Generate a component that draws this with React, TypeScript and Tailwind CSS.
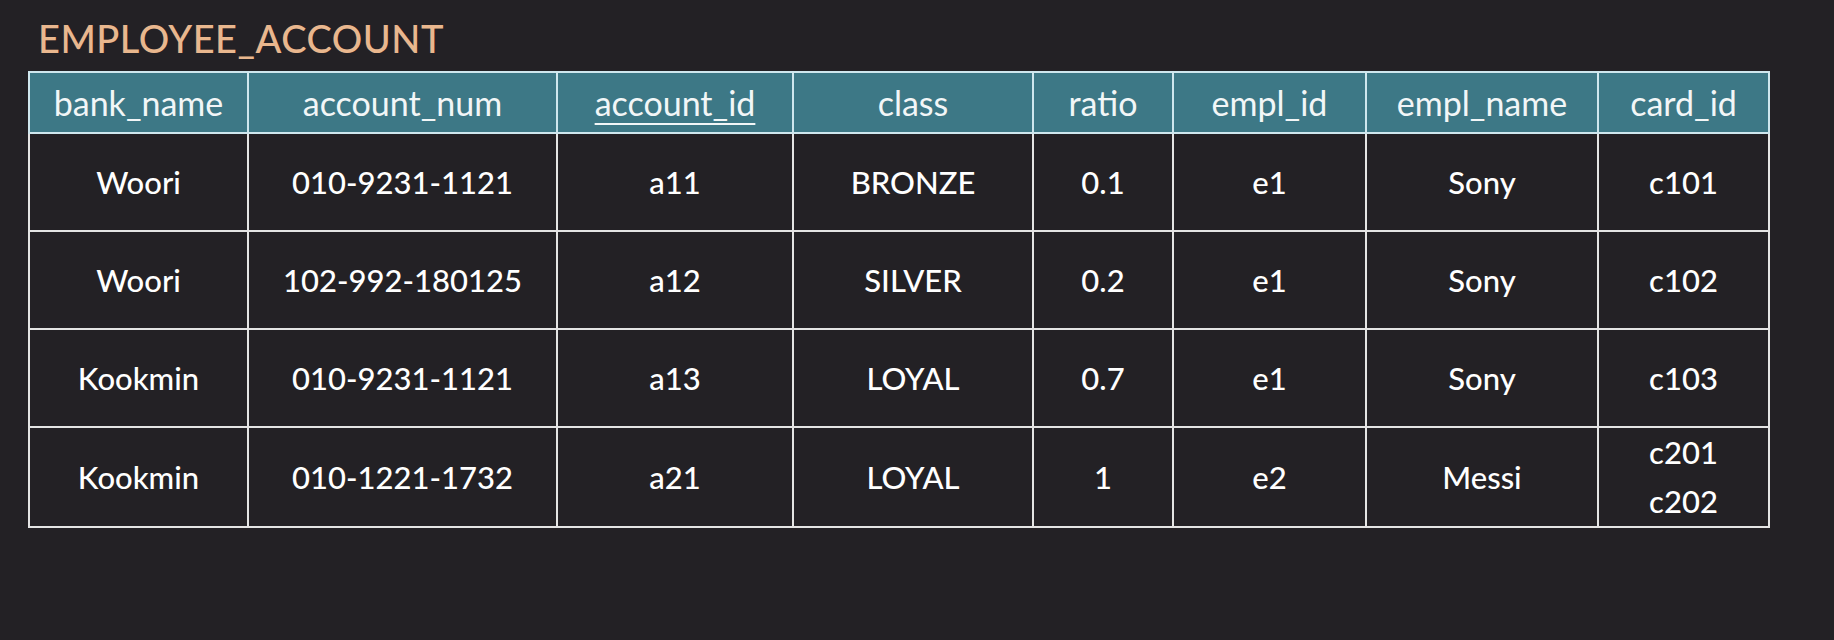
import React from 'react';

type Row = {
  bank: string;
  num: string;
  id: string;
  cls: string;
  ratio: string;
  emplId: string;
  emplName: string;
  cards: string[];
};

const columns = [
  { key: 'bank_name', width: 'w-[219px]' },
  { key: 'account_num', width: 'w-[309px]' },
  { key: 'account_id', width: 'w-[236px]', pk: true },
  { key: 'class', width: 'w-[240px]' },
  { key: 'ratio', width: 'w-[140px]' },
  { key: 'empl_id', width: 'w-[193px]' },
  { key: 'empl_name', width: 'w-[232px]' },
  { key: 'card_id', width: 'w-[171px]' },
];

const rows: Row[] = [
  { bank: 'Woori', num: '010-9231-1121', id: 'a11', cls: 'BRONZE', ratio: '0.1', emplId: 'e1', emplName: 'Sony', cards: ['c101'] },
  { bank: 'Woori', num: '102-992-180125', id: 'a12', cls: 'SILVER', ratio: '0.2', emplId: 'e1', emplName: 'Sony', cards: ['c102'] },
  { bank: 'Kookmin', num: '010-9231-1121', id: 'a13', cls: 'LOYAL', ratio: '0.7', emplId: 'e1', emplName: 'Sony', cards: ['c103'] },
  { bank: 'Kookmin', num: '010-1221-1732', id: 'a21', cls: 'LOYAL', ratio: '1', emplId: 'e2', emplName: 'Messi', cards: ['c201', 'c202'] },
];

export default function App() {
  return (
    <div className="w-[1834px] h-[640px] bg-[#232125] overflow-hidden font-['Lato','Liberation_Sans',sans-serif]">
      <div className="pl-[38px] pt-[15px] pb-[10px]">
        <h1 className="text-[38px] leading-[46px] font-medium text-[#e9b78e] tracking-[0.5px]">EMPLOYEE_ACCOUNT</h1>
      </div>
      <div className="pl-[28px]">
        <table className="border-collapse table-fixed text-center text-white">
          <thead>
            <tr className="h-[61px] bg-[#3d7886]">
              {columns.map((c) => (
                <th
                  key={c.key}
                  className={`${c.width} border-2 border-[#cfe7ee] font-normal text-[34px] text-[#f2f6f7]`}
                >
                  <span className={c.pk ? 'underline decoration-2 underline-offset-[7px]' : ''}>{c.key}</span>
                </th>
              ))}
            </tr>
          </thead>
          <tbody className="font-medium text-[31px]">
            {rows.map((r, i) => (
              <tr key={i} className="h-[98px]">
                <td className="border-2 border-[#e4e4e4]">{r.bank}</td>
                <td className="border-2 border-[#e4e4e4]">{r.num}</td>
                <td className="border-2 border-[#e4e4e4]">{r.id}</td>
                <td className="border-2 border-[#e4e4e4]">{r.cls}</td>
                <td className="border-2 border-[#e4e4e4]">{r.ratio}</td>
                <td className="border-2 border-[#e4e4e4]">{r.emplId}</td>
                <td className="border-2 border-[#e4e4e4]">{r.emplName}</td>
                <td className="border-2 border-[#e4e4e4] leading-[49px]">
                  {r.cards.map((c) => (
                    <div key={c}>{c}</div>
                  ))}
                </td>
              </tr>
            ))}
          </tbody>
        </table>
      </div>
    </div>
  );
}
